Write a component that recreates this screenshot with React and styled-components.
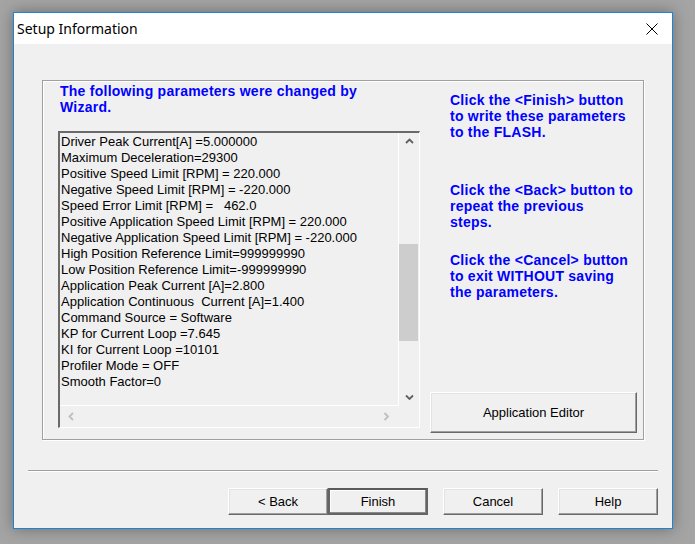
import React from "react";
import styled, { createGlobalStyle } from "styled-components";

/* ============================ Global ============================ */
const GlobalStyle = createGlobalStyle`
    html, body { margin:0; padding:0; }
    body {
        background:#a4a4a4;
        font-family:"Liberation Sans", Arial, sans-serif;
    }
`;

/* ============================ Styles ============================ */
const Desk = styled.div` // 背景のデスクトップ
    width:695px;
    height:544px;
    padding:12px 0 0 13px;
    box-sizing:border-box;
    overflow:hidden;
`;

const Win = styled.div` // ダイアログ全体
    width:660px;
    height:517px;
    box-sizing:border-box;
    border:1px solid #1a84d8;
    background:#f0f0f0;
    box-shadow:0 0 14px rgba(0,0,0,0.35);
    display:flex;
    flex-direction:column;
`;

const TitleBar = styled.div`
    height:31px;
    background:#ffffff;
    display:flex;
    align-items:center;
    justify-content:space-between;
    padding:0 14px 0 3px;
`;

const Title = styled.div`
    font-family:"Noto Sans", "Open Sans", sans-serif;
    font-size:14px;
    color:#000;
    padding-bottom:1px;
`;

const Body = styled.div`
    flex:1;
    display:flex;
    flex-direction:column;
    padding-top:36px;
`;

const Group = styled.div` // グループボックス
    margin:0 28px;
    height:360px;
    box-sizing:border-box;
    border:1px solid #a0a0a0;
    box-shadow:inset 1px 1px 0 #fff, 1px 1px 0 #fff;
    display:flex;
    padding:2px 6px 6px 15px;
`;

const LeftCol = styled.div`
    width:362px;
    display:flex;
    flex-direction:column;
`;

const BlueText = styled.div` // 青い太字の文
    color:#0000ff;
    font-weight:bold;
    font-size:14px;
    letter-spacing:0.25px;
    line-height:16px;
    white-space:nowrap;
`;

const Heading = styled(BlueText)`
    margin-left:2px;
`;

const ListBox = styled.div` // リストボックス
    margin-top:16px;
    height:297px;
    box-sizing:border-box;
    border-top:2px solid #6a6a6a;
    border-left:2px solid #6a6a6a;
    border-right:1px solid #ffffff;
    border-bottom:1px solid #ffffff;
    display:grid;
    grid-template-columns:1fr 20px;
    grid-template-rows:1fr 21px;
`;

const ListText = styled.div`
    border-right:1px solid #ffffff;
    border-bottom:1px solid #ffffff;
    padding:1px 0 0 1px;
    overflow:hidden;
`;

const ListLine = styled.div`
    font-size:13px;
    line-height:16px;
    color:#000;
    white-space:pre;
`;

const VScroll = styled.div`
    display:flex;
    flex-direction:column;
`;

const ArrowCell = styled.div`
    height:17px;
    display:flex;
    align-items:center;
    justify-content:center;
    flex:none;
`;

const Track = styled.div`
    flex:1;
    display:flex;
    flex-direction:column;
`;

const Thumb = styled.div`
    width:19px;
    background:#cdcdcd;
    flex:none;
`;

const HScroll = styled.div`
    display:flex;
    align-items:center;
    justify-content:space-between;
    padding:0 9px 0 8px;
`;

const Corner = styled.div``;

const RightCol = styled.div`
    margin-left:10px;
    width:207px;
    display:flex;
    flex-direction:column;
    padding-top:9px;
`;

const Note = styled(BlueText)` // 右側の説明文
    margin-left:20px;
    margin-top:${(p) => p.$gap || 0}px;
`;

const WinButton = styled.button` // 立体ボタン
    box-sizing:border-box;
    width:${(p) => p.$w || 100}px;
    height:${(p) => p.$h || 27}px;
    background:#f0f0f0;
    font-family:"Liberation Sans", Arial, sans-serif;
    font-size:13px;
    color:#000;
    padding:0;
    border-top:1px solid #ffffff;
    border-left:1px solid #ffffff;
    border-right:1px solid #696969;
    border-bottom:1px solid #696969;
    box-shadow:inset -1px -1px 0 #a0a0a0, inset 1px 1px 0 #e3e3e3;
`;

const DefaultButton = styled(WinButton)`
    border:2px solid #646464;
    border-top-color:#5a5a5a;
    box-shadow:inset -1px -1px 0 #8a8a8a, inset 1px 1px 0 #ffffff;
`;

const EditorButton = styled(WinButton)`
    margin-top:auto;
`;

const Separator = styled.div`
    margin:30px 14px 0 14px;
    height:1px;
    background:#a0a0a0;
    border-bottom:1px solid #ffffff;
`;

const ButtonRow = styled.div`
    margin-top:16px;
    display:flex;
    justify-content:flex-end;
    padding-right:14px;
    gap:15px;
`;

const Pair = styled.div`
    display:flex;
`;

/* ============================ Data ============================ */
const params = [
    "Driver Peak Current[A] =5.000000",
    "Maximum Deceleration=29300",
    "Positive Speed Limit [RPM] = 220.000",
    "Negative Speed Limit [RPM] = -220.000",
    "Speed Error Limit [RPM] =   462.0",
    "Positive Application Speed Limit [RPM] = 220.000",
    "Negative Application Speed Limit [RPM] = -220.000",
    "High Position Reference Limit=999999990",
    "Low Position Reference Limit=-999999990",
    "Application Peak Current [A]=2.800",
    "Application Continuous  Current [A]=1.400",
    "Command Source = Software",
    "KP for Current Loop =7.645",
    "KI for Current Loop =10101",
    "Profiler Mode = OFF",
    "Smooth Factor=0",
];

/* ============================ Icons ============================ */
const Chevron = ({ dir, color }) => {
    const pts = {
        up: "1,5 4.5,1.5 8,5",
        down: "1,1.5 4.5,5 8,1.5",
        left: "5,1 1.5,4.5 5,8",
        right: "1.5,1 5,4.5 1.5,8",
    }[dir];
    const vertical = dir === "up" || dir === "down";
    return (
        <svg width={vertical ? 9 : 7} height={vertical ? 7 : 9} viewBox={vertical ? "0 0 9 7" : "0 0 7 9"}>
            <polyline points={pts} fill="none" stroke={color} strokeWidth="1.8" />
        </svg>
    );
};

const CloseIcon = () => (
    <svg width="12" height="12" viewBox="0 0 12 12">
        <path d="M0.5 0.5 L11.5 11.5 M11.5 0.5 L0.5 11.5" stroke="#000" strokeWidth="1" />
    </svg>
);

/* ============================ Main ============================ */
export default function App() {
    return (
        <Desk>
            <GlobalStyle />
            <Win>
                <TitleBar>
                    <Title>Setup Information</Title>
                    <CloseIcon />
                </TitleBar>
                <Body>
                    <Group>
                        <LeftCol>
                            <Heading>
                                The following parameters were changed by
                                <br />
                                Wizard.
                            </Heading>
                            <ListBox>
                                <ListText>
                                    {params.map((t) => (
                                        <ListLine key={t}>{t}</ListLine>
                                    ))}
                                </ListText>
                                <VScroll>
                                    <ArrowCell>
                                        <Chevron dir="up" color="#606060" />
                                    </ArrowCell>
                                    <Track>
                                        <Thumb style={{ marginTop: 94, height: 97 }} />
                                    </Track>
                                    <ArrowCell>
                                        <Chevron dir="down" color="#606060" />
                                    </ArrowCell>
                                </VScroll>
                                <HScroll>
                                    <Chevron dir="left" color="#bfbfbf" />
                                    <Chevron dir="right" color="#bfbfbf" />
                                </HScroll>
                                <Corner />
                            </ListBox>
                        </LeftCol>
                        <RightCol>
                            <Note>
                                Click the &lt;Finish&gt; button
                                <br />
                                to write these parameters
                                <br />
                                to the FLASH.
                            </Note>
                            <Note $gap={42}>
                                Click the &lt;Back&gt; button to
                                <br />
                                repeat the previous
                                <br />
                                steps.
                            </Note>
                            <Note $gap={22}>
                                Click the &lt;Cancel&gt; button
                                <br />
                                to exit WITHOUT saving
                                <br />
                                the parameters.
                            </Note>
                            <EditorButton $w={207} $h={41}>Application Editor</EditorButton>
                        </RightCol>
                    </Group>
                    <Separator />
                    <ButtonRow>
                        <Pair>
                            <WinButton>&lt; Back</WinButton>
                            <DefaultButton>Finish</DefaultButton>
                        </Pair>
                        <WinButton>Cancel</WinButton>
                        <WinButton>Help</WinButton>
                    </ButtonRow>
                </Body>
            </Win>
        </Desk>
    );
}
